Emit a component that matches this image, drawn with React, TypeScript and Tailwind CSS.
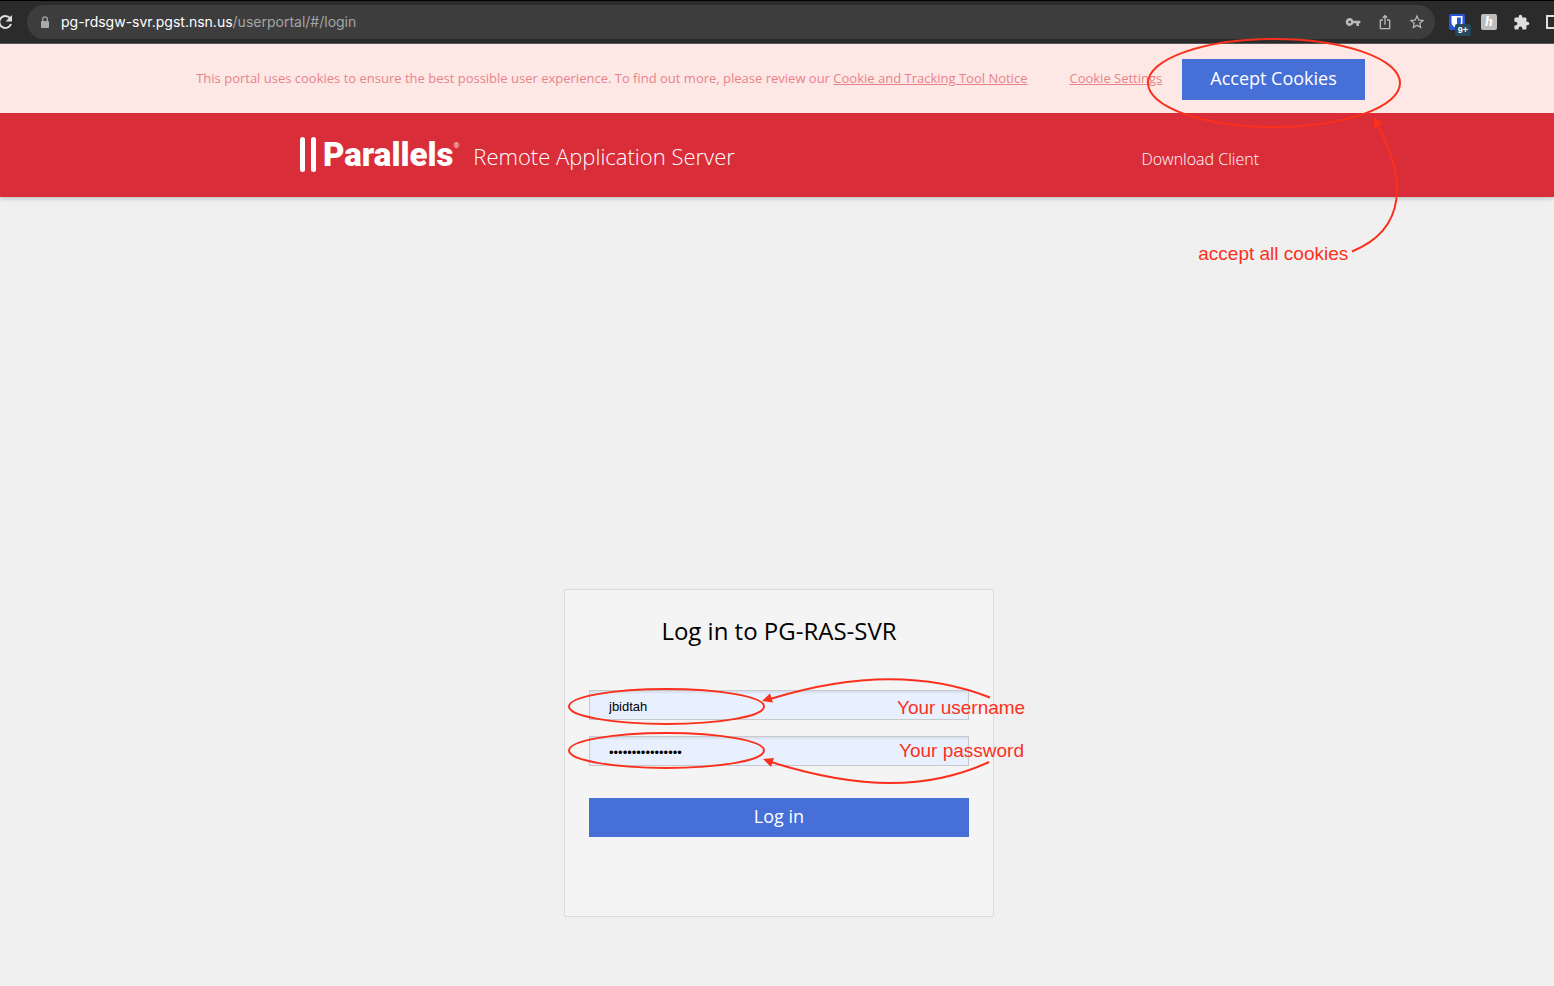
import type { ReactNode } from "react";
import { MdExtension, MdIosShare, MdStarBorder, MdVpnKey } from "react-icons/md";

const NOTE_TEXT =
  "pointer-events-none absolute whitespace-nowrap font-['Liberation_Sans',sans-serif] text-[19px] leading-6 text-[#fb301c]";

function IconButton({ label, children }: { label: string; children: ReactNode }) {
  return (
    <button
      type="button"
      aria-label={label}
      className="flex h-8 w-8 shrink-0 items-center justify-center"
    >
      {children}
    </button>
  );
}

function BrowserBar() {
  return (
    <div className="flex h-11 items-center overflow-hidden border-t border-b border-t-black border-b-[#555555] bg-[#2b2b2b] text-[#dedede]">
      <div className="flex w-[27px] shrink-0 items-center">
        <button type="button" aria-label="Reload" className="-ml-1">
          <svg width="18" height="18" viewBox="0 0 18 18" fill="none" aria-hidden="true">
            <path d="M14 5.200A6 6 0 1 0 15 11" stroke="currentColor" strokeWidth="2" />
            <path d="M16 2v6.500H9.500z" fill="currentColor" />
          </svg>
        </button>
      </div>
      <div className="flex h-[34px] min-w-0 flex-1 items-center rounded-full bg-[#3d3d3d] pr-[2px] pl-[11px] text-[#b9bbbd]">
        <svg width="14" height="14" viewBox="0 0 14 14" className="shrink-0" aria-hidden="true">
          <rect x="3" y="6" width="8" height="7" rx="1" fill="#a6a9ae" />
          <path d="M4.700 6V4.200a2.300 2.300 0 0 1 4.600 0V6" fill="none" stroke="#a6a9ae" strokeWidth="1.300" />
        </svg>
        <div className="min-w-0 flex-1 truncate pl-[9px] font-['Inter',sans-serif] text-[14px] leading-5 text-[#a5a5a5]">
          <span className="text-white">pg-rdsgw-svr.pgst.nsn.us</span>
          /userportal/#/login
        </div>
        <IconButton label="Saved passwords">
          <MdVpnKey size={16} />
        </IconButton>
        <IconButton label="Share">
          <MdIosShare size={16} />
        </IconButton>
        <IconButton label="Bookmark">
          <MdStarBorder size={18} />
        </IconButton>
      </div>
      <div className="ml-[6px] flex w-[113px] shrink-0 items-center">
        <IconButton label="Password manager">
          <span className="relative">
            <svg width="16" height="16" viewBox="0 0 16 16">
              <rect width="16" height="16" rx="2" fill="#2a55d8" />
              <path d="M2.500 2h11v6.300c0 3-2.400 4.700-5.500 6.200-3.100-1.500-5.500-3.200-5.500-6.200z" fill="#fff" />
              <path d="M8 3.600h3.900v4.700c0 2-1.500 3.300-3.900 4.500z" fill="#2a55d8" />
            </svg>
            <span className="absolute top-[10px] left-[6px] flex h-3 w-4 items-center justify-center rounded-[2px] bg-[#264a5c] font-['Liberation_Sans',sans-serif] text-[9px] leading-3 font-bold text-white">
              9+
            </span>
          </span>
        </IconButton>
        <IconButton label="Coupons">
          <span className="flex h-4 w-4 items-center justify-center rounded-[2px] bg-[#bdbdbd] font-['Liberation_Serif',serif] text-[14px] leading-4 font-bold text-white italic">
            h
          </span>
        </IconButton>
        <IconButton label="Extensions">
          <MdExtension size={17} />
        </IconButton>
        <IconButton label="Side panel">
          <span className="h-[14px] w-[14px] border-2 border-[#dedede]" />
        </IconButton>
      </div>
    </div>
  );
}

function AcceptNote() {
  return (
    <>
      <svg
        className="pointer-events-none absolute -top-5 -left-9"
        width="256"
        height="218"
        viewBox="0 0 256 218"
        fill="none"
        stroke="#fb301c"
        strokeWidth="2"
      >
        <ellipse cx="128" cy="46" rx="126" ry="44" />
        <path d="M206 214.500C262 192 260 140 231 87" />
        <path d="M228 80v11.500l9-5.500z" fill="#fb301c" stroke="none" />
      </svg>
      <span className={`${NOTE_TEXT} top-[185px] left-4`}>accept all cookies</span>
    </>
  );
}

function CookieBar() {
  return (
    <div className="relative z-10 flex h-[69px] items-center justify-center bg-[#fee8e6] pl-[7px] text-[13px] leading-5 text-[#e8828a]">
      <p className="pb-[2px]">
        This portal uses cookies to ensure the best possible user experience. To find out more, please review our{" "}
        <a href="#notice" className="underline">
          Cookie and Tracking Tool Notice
        </a>
      </p>
      <a href="#settings" className="ml-[42px] pb-[2px] underline">
        Cookie Settings
      </a>
      <div className="relative ml-5 pt-[2px]">
        <button
          type="button"
          className="block h-[41px] bg-[#466fd8] px-7 pb-1 text-[18px] leading-6 text-white"
        >
          Accept Cookies
        </button>
        <AcceptNote />
      </div>
    </div>
  );
}

function Header() {
  return (
    <header className="h-[84px] bg-[#da2d3a] pl-1 text-white shadow-[0_1px_5px_rgba(0,0,0,0.25)]">
      <div className="mx-auto flex h-full max-w-[960px] items-center justify-between">
        <div className="flex items-center pb-[2px] pl-px">
          <svg width="16" height="35" viewBox="0 0 16 35" fill="#fff" aria-hidden="true">
            <rect width="5" height="35" rx="2.500" />
            <rect x="11" width="5" height="35" rx="2.500" />
          </svg>
          <span className="ml-[7px] pt-[2px] font-['Roboto',sans-serif] text-[33px] leading-9 font-black">
            Parallels
          </span>
          <sup className="-top-2 text-[7px] leading-3">®</sup>
          <span className="ml-[14px] pt-1 text-[22px] leading-8 font-light">
            Remote Application Server
          </span>
        </div>
        <a href="#download" className="pt-2 text-[16px] leading-6 font-light">
          Download Client
        </a>
      </div>
    </header>
  );
}

function FieldNotes() {
  return (
    <>
      <svg
        className="pointer-events-none absolute -top-[14px] -left-[23px]"
        width="428"
        height="110"
        viewBox="0 0 428 110"
        fill="none"
        stroke="#fb301c"
        strokeWidth="2"
      >
        <ellipse cx="100.500" cy="30.500" rx="97.500" ry="17.500" />
        <ellipse cx="100.500" cy="74.500" rx="97.500" ry="17.500" />
        <path d="M424 21.500C362 -3 288 -3 204 23" />
        <path d="M423 86C362 114 294 114 205 86" />
        <path d="M196 25l8-7.500 3 9z" fill="#fb301c" stroke="none" />
        <path d="M197 83l11-1-3 9z" fill="#fb301c" stroke="none" />
      </svg>
      <span className={`${NOTE_TEXT} top-[6px] left-[308px]`}>Your username</span>
      <span className={`${NOTE_TEXT} top-[49px] left-[310px]`}>Your password</span>
    </>
  );
}

const FIELD =
  "block h-[30px] w-full border border-[#c8c9cc] bg-[#e8f0fe] px-[19px] pt-[2px] font-['Liberation_Sans',sans-serif] text-[13px] text-black shadow-[inset_0_2px_2px_rgba(0,0,0,0.07)] outline-none";

export default function App() {
  return (
    <div className="flex min-h-screen flex-col overflow-x-hidden bg-[#f0f0f0] font-['Open_Sans',sans-serif]">
      <BrowserBar />
      <CookieBar />
      <Header />
      <main className="flex flex-1 flex-col items-center justify-end pb-[69px] pl-1">
        <form
          className="w-full max-w-[430px] rounded-[2px] border border-[#dadada] bg-[#f4f4f4] px-6 pt-6 pb-[79px]"
          onSubmit={(event) => event.preventDefault()}
        >
          <h1 className="pb-[2px] text-center text-[24px] leading-[34px] text-black">
            Log in to PG-RAS-SVR
          </h1>
          <div className="relative mt-10 flex flex-col gap-4">
            <input aria-label="Username" type="text" defaultValue="jbidtah" className={FIELD} />
            <input
              aria-label="Password"
              type="password"
              defaultValue="0123456789abcdef"
              className={FIELD}
            />
            <FieldNotes />
          </div>
          <button
            type="submit"
            className="mt-8 block h-[39px] w-full bg-[#466fd8] pb-1 text-[18px] leading-6 text-white"
          >
            Log in
          </button>
        </form>
      </main>
    </div>
  );
}
